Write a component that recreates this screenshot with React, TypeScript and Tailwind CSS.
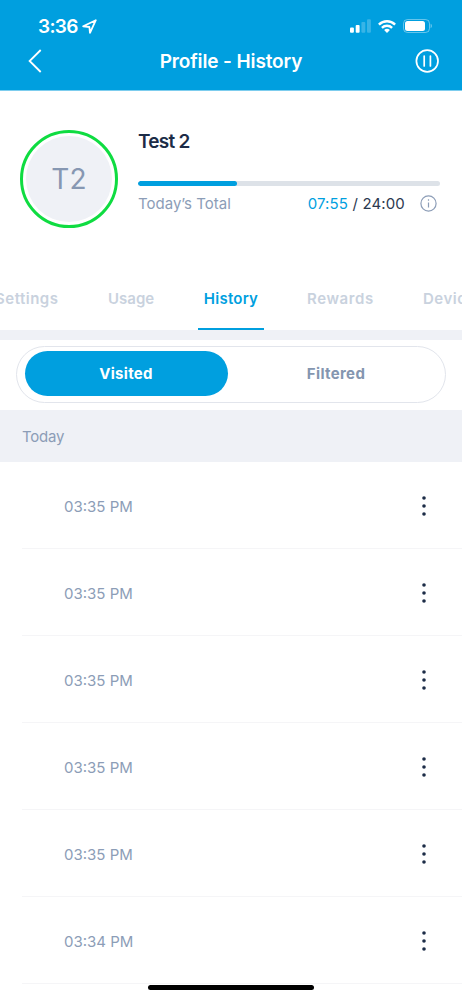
import React from 'react';

interface HistoryEntry {
  id: number;
  time: string;
}

const entries: HistoryEntry[] = [
  { id: 1, time: '03:35 PM' },
  { id: 2, time: '03:35 PM' },
  { id: 3, time: '03:35 PM' },
  { id: 4, time: '03:35 PM' },
  { id: 5, time: '03:35 PM' },
  { id: 6, time: '03:34 PM' },
];

const StatusBar: React.FC = () => (
  <div className="flex h-10 items-end justify-between pt-4 pr-[30px] pl-[38px]">
    <div className="flex h-7 items-center gap-[4px]">
      <span className="pt-px text-[19px] leading-7 font-semibold tracking-[-0.65px]">3:36</span>
      <svg className="h-[15px] w-[15px]" viewBox="0 0 15 15" fill="none" stroke="currentColor" strokeWidth="1.8" strokeLinejoin="round">
        <path d="M13.8 1.2 1.2 7.3l6.2.7.6 5.8z" />
      </svg>
    </div>
    <div className="flex h-7 items-center">
      <svg className="h-[14px] w-[21px]" viewBox="0 0 21 14" fill="currentColor">
        <rect x="0" y="8.6" width="3.9" height="5.2" rx="1" />
        <rect x="5.7" y="6" width="3.9" height="7.8" rx="1" />
        <rect x="11.4" y="3" width="3.9" height="10.8" rx="1" opacity="0.22" />
        <rect x="17" y="0.2" width="3.9" height="13.6" rx="1" opacity="0.22" />
      </svg>
      <svg className="ml-[7px] h-[13px] w-[18px]" viewBox="0 0 18 13" fill="none" stroke="currentColor" strokeWidth="2.4">
        <path d="M.9 4.6a11.6 11.6 0 0 1 16.2 0" />
        <path d="M3.9 7.9a7.3 7.3 0 0 1 10.2 0" />
        <path d="M9 13 6.1 10.1a4.1 4.1 0 0 1 5.8 0z" fill="currentColor" stroke="none" />
      </svg>
      <svg className="ml-[7px] h-[14px] w-[29px]" viewBox="0 0 29 14" fill="none">
        <rect x="0.5" y="0.5" width="26" height="13" rx="4" stroke="currentColor" opacity="0.4" />
        <rect x="2" y="2" width="20" height="10" rx="2.5" fill="currentColor" />
        <path d="M27.7 4.8c1.4.7 1.4 3.7 0 4.4z" fill="currentColor" opacity="0.5" />
      </svg>
    </div>
  </div>
);

const TitleBar: React.FC = () => (
  <div className="grid h-[50px] grid-cols-[1fr_auto_1fr] items-start px-[23px]">
    <button className="ml-[5px] flex h-[42px] items-center justify-start" aria-label="Back">
      <svg className="h-6 w-[14px]" viewBox="0 0 14 24" fill="none" stroke="currentColor" strokeWidth="1.8">
        <path d="M12.7 1 1.6 12l11.1 11" />
      </svg>
    </button>
    <h1 className="text-[19px] leading-[43px] font-semibold tracking-[-0.12px]">Profile - History</h1>
    <button className="flex h-[42px] items-center justify-end" aria-label="Pause">
      <svg className="h-6 w-6" viewBox="0 0 24 24" fill="none" stroke="currentColor" strokeWidth="1.7">
        <circle cx="12.2" cy="12" r="10.8" />
        <path d="M9.2 7v10M15.4 7v10" strokeLinecap="round" />
      </svg>
    </button>
  </div>
);

const ProfileSummary: React.FC = () => (
  <section className="flex h-[175px] items-start pt-[39px] pr-[22px] pl-5">
    <div className="flex h-[98px] w-[98px] shrink-0 items-center justify-center rounded-full border-3 border-[#0fdc41]">
      <div className="flex h-[86px] w-[86px] items-center justify-center rounded-full bg-[#eff1f6] text-[28px] tracking-[0.1px] text-[#8697b2]">
        T2
      </div>
    </div>
    <div className="ml-5 flex-1">
      <h2 className="pt-px text-[19px] leading-[22px] font-semibold tracking-[-0.75px] text-[#1c2c47]">Test 2</h2>
      <div className="mt-7 h-[5px] overflow-hidden rounded-full bg-[#dde2e8]">
        <div className="h-full w-[99px] rounded-full bg-[#009fdf]" />
      </div>
      <div className="mt-1.5 flex items-center text-[15px] leading-[23px]">
        <span className="flex-1 text-[#8c9db7]">Today’s Total</span>
        <span className="tracking-[0.15px] text-[#2b3950]">
          <span className="text-[#009fdf]">07:55</span> / 24:00
        </span>
        <svg className="mr-[3px] mb-px ml-[15px] h-[17px] w-[17px] text-[#8c9db7]" viewBox="0 0 17 17" fill="none" stroke="currentColor" strokeWidth="1.2">
          <circle cx="8.5" cy="8.5" r="7.6" />
          <path d="M8.5 7.4v5M8.5 4.3v1.5" />
        </svg>
      </div>
    </div>
  </section>
);

const Tabs: React.FC = () => (
  <nav className="flex h-16 overflow-hidden text-[15px] leading-[65px] font-semibold whitespace-nowrap text-[#c9d2de]">
    <span className="-ml-[5px] w-[113px] shrink-0 tracking-[0.5px]">Settings</span>
    <span className="w-[90px] shrink-0">Usage</span>
    <span className="w-[66px] shrink-0 border-b-2 border-[#009fdf] text-center tracking-[0.25px] text-[#009fdf]">History</span>
    <span className="ml-[43px] w-[116px] shrink-0 tracking-[0.6px]">Rewards</span>
    <span className="shrink-0 tracking-[0.5px]">Devices</span>
  </nav>
);

const FilterToggle: React.FC = () => (
  <div className="h-20 border-t-10 border-[#eff1f6] px-4 pt-1.5">
    <div className="flex h-[57px] rounded-full border border-[#e2e5ec] pt-[4px] pl-[7.5px] text-[15px] leading-[45px] font-bold">
      <button className="h-[45px] w-[203px] rounded-full bg-[#009fdf] tracking-[0.3px] text-white">Visited</button>
      <button className="h-[45px] w-[217px] tracking-[0.35px] text-[#8496b0]">Filtered</button>
    </div>
  </div>
);

const HistoryRow: React.FC<{ entry: HistoryEntry }> = ({ entry }) => (
  <li className="ml-[22px] flex h-[86.9px] items-center justify-between border-b border-[#f5f5f7] pt-[2px] pr-[35px] pl-[42px]">
    <span className="pt-[2px] text-[15px] text-[#8c9db7]">{entry.time}</span>
    <button aria-label="More options">
      <svg className="h-5 w-[6px]" viewBox="0 0 6 20" fill="#1c2c47">
        <circle cx="3" cy="2" r="1.8" />
        <circle cx="3" cy="10" r="1.8" />
        <circle cx="3" cy="18" r="1.8" />
      </svg>
    </button>
  </li>
);

const App: React.FC = () => {
  return (
    <div className="relative h-[999px] w-[462px] overflow-hidden bg-white font-['Inter',sans-serif]">
      <header className="h-[91px] border-b border-[#7dcdee] bg-[#009fdf] text-white">
        <StatusBar />
        <TitleBar />
      </header>
      <ProfileSummary />
      <Tabs />
      <FilterToggle />
      <h3 className="h-[52.4px] bg-[#eff1f6] pl-[22px] text-[15px] leading-[53px] tracking-[-0.2px] text-[#8c9db7]">Today</h3>
      <ul>
        {entries.map((entry) => (
          <HistoryRow key={entry.id} entry={entry} />
        ))}
      </ul>
      <div className="absolute bottom-[9px] left-[148px] h-[5px] w-[166px] rounded-full bg-black" />
    </div>
  );
};

export default App;
